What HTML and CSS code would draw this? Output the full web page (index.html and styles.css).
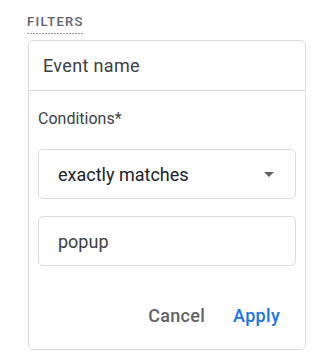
FILE: index.html
```html
<!DOCTYPE html>
<html>
<head>
<meta charset="utf-8">
<link rel="stylesheet" href="styles.css">
</head>
<body>
<div class="page">
  <div class="section-title"><span class="title-text">FILTERS</span></div>
  <div class="card">
    <div class="card-header">Event name</div>
    <div class="card-body">
      <div class="label">Conditions*</div>
      <div class="field select">
        <span class="field-text">exactly matches</span>
        <svg class="arrow" width="10" height="5" viewBox="0 0 10 5"><path d="M0 0 L10 0 L5 5 Z" fill="#5f6368"/></svg>
      </div>
      <div class="field input">
        <span class="field-text">popup</span>
      </div>
      <div class="actions">
        <span class="btn cancel">Cancel</span>
        <span class="btn apply">Apply</span>
      </div>
    </div>
  </div>
</div>
</body>
</html>
```
FILE: styles.css
```css
html, body {
  margin: 0;
  padding: 0;
  background: #ffffff;
}
body {
  font-family: Roboto, "Liberation Sans", sans-serif;
  color: #3c4043;
}
.page {
  padding: 11px 26px 0 28px;
  width: 278px;
}
.section-title {
  height: 29px;
}
.title-text {
  display: inline-block;
  font-size: 13px;
  font-weight: 500;
  letter-spacing: 1.3px;
  color: #5f6368;
  line-height: 16px;
  margin-left: -1px;
  padding-bottom: 4px;
  background-image: linear-gradient(to right, #9aa0a6 0 2px, transparent 2px 3px);
  background-size: 3px 1px;
  background-repeat: repeat-x;
  background-position: left bottom;
}
.card {
  border: 1px solid #dadce0;
  border-radius: 5px;
  height: 308px;
}
.card-header {
  height: 49px;
  border-bottom: 1px solid #dadce0;
  display: flex;
  align-items: center;
  padding-left: 14px;
  font-size: 18px;
  font-weight: 400;
  letter-spacing: 0.35px;
  color: #3c4043;
}
.card-body {
  padding: 18px 9px 0 9px;
}
.label {
  font-size: 16px;
  line-height: 20px;
  color: #3c4043;
  margin-bottom: 20px;
}
.field {
  height: 48px;
  border: 1px solid #dadce0;
  border-radius: 5px;
  display: flex;
  align-items: center;
  padding: 0 19px;
  font-size: 18px;
  color: #202124;
}
.select {
  justify-content: space-between;
}
.arrow {
  display: block;
  margin-right: 2px;
}
.input {
  margin-top: 17px;
  color: #3c4043;
}
.actions {
  display: flex;
  justify-content: flex-end;
  gap: 28px;
  padding-right: 16px;
  margin-top: 38px;
  font-size: 18px;
  font-weight: 500;
  letter-spacing: 0.3px;
  line-height: 24px;
}
.cancel {
  color: #5f6368;
}
.apply {
  color: #1a73e8;
}
```
